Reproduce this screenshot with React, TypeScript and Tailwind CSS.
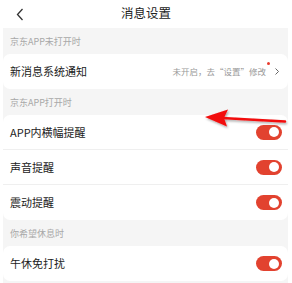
import React from 'react';

const font = { fontFamily: '"Noto Sans CJK SC", "Noto Sans", sans-serif' };

function Toggle() {
  return (
    <div className="w-[26px] h-[15px] rounded-full bg-[#e2422f] flex items-center justify-end pr-[3px]">
      <div className="w-[10px] h-[10px] rounded-full bg-white" />
    </div>
  );
}

function Row({ label, last }: { label: string; last?: boolean }) {
  return (
    <div className={`h-[35px] flex items-center justify-between pl-[7px] pr-[6px] ${last ? '' : 'border-b border-[#efefef]'}`}>
      <span className="text-[11px] text-[#222]">{label}</span>
      <Toggle />
    </div>
  );
}

function SectionTitle({ text }: { text: string }) {
  return (
    <div className="h-[26px] flex items-center pl-[7px] pt-[2px] text-[9px] text-[#a8a8a8]">{text}</div>
  );
}

export default function App() {
  return (
    <div className="w-[292px] h-[283px] bg-white relative overflow-hidden" style={font}>
      {/* Header */}
      <div className="h-[28px] flex items-center justify-center relative">
        <svg className="absolute left-[16px] top-[8px]" width="8" height="13" viewBox="0 0 8 13">
          <path d="M6.5 1 L1.5 6.5 L6.5 12" fill="none" stroke="#333" strokeWidth="1.3" />
        </svg>
        <span className="text-[12.5px] text-[#222] -mt-[1px]">消息设置</span>
      </div>

      <div className="mx-[3px] mr-[4px] bg-[#f5f5f5] pb-[3px]">
        <SectionTitle text="京东APP未打开时" />
        <div className="bg-white rounded-[7px] h-[35px] flex items-center justify-between pl-[7px] pr-[9px]">
          <span className="text-[11px] text-[#222]">新消息系统通知</span>
          <div className="flex items-center">
            <span className="text-[8.5px] text-[#999]">未开启，去“设置”修改</span>
            <span className="w-[3px] h-[3px] rounded-full bg-[#e93b2d] self-start -mt-[3px] ml-[1px]" />
            <svg className="ml-[5px]" width="4" height="7" viewBox="0 0 4 7">
              <path d="M0.5 0.5 L3.5 3.5 L0.5 6.5" fill="none" stroke="#555" strokeWidth="0.9" />
            </svg>
          </div>
        </div>

        <SectionTitle text="京东APP打开时" />
        <div className="bg-white rounded-[7px]">
          <Row label="APP内横幅提醒" />
          <Row label="声音提醒" />
          <Row label="震动提醒" last />
        </div>

        <SectionTitle text="你希望休息时" />
        <div className="bg-white rounded-[7px]">
          <Row label="午休免打扰" last />
        </div>
      </div>

      {/* annotation arrow */}
      <svg className="absolute left-0 top-0 pointer-events-none" width="292" height="283" viewBox="0 0 292 283">
        <defs>
          <filter id="sh" x="-20%" y="-50%" width="140%" height="200%">
            <feDropShadow dx="1" dy="1.5" stdDeviation="1" floodColor="#000" floodOpacity="0.35" />
          </filter>
        </defs>
        <g filter="url(#sh)">
          <path d="M285 121.5 L222 118" stroke="#f20d0d" strokeWidth="2.5" strokeLinecap="round" />
          <path d="M205 117 L228 109.5 L224 118 L227 126.5 Z" fill="#f20d0d" />
        </g>
      </svg>
    </div>
  );
}
